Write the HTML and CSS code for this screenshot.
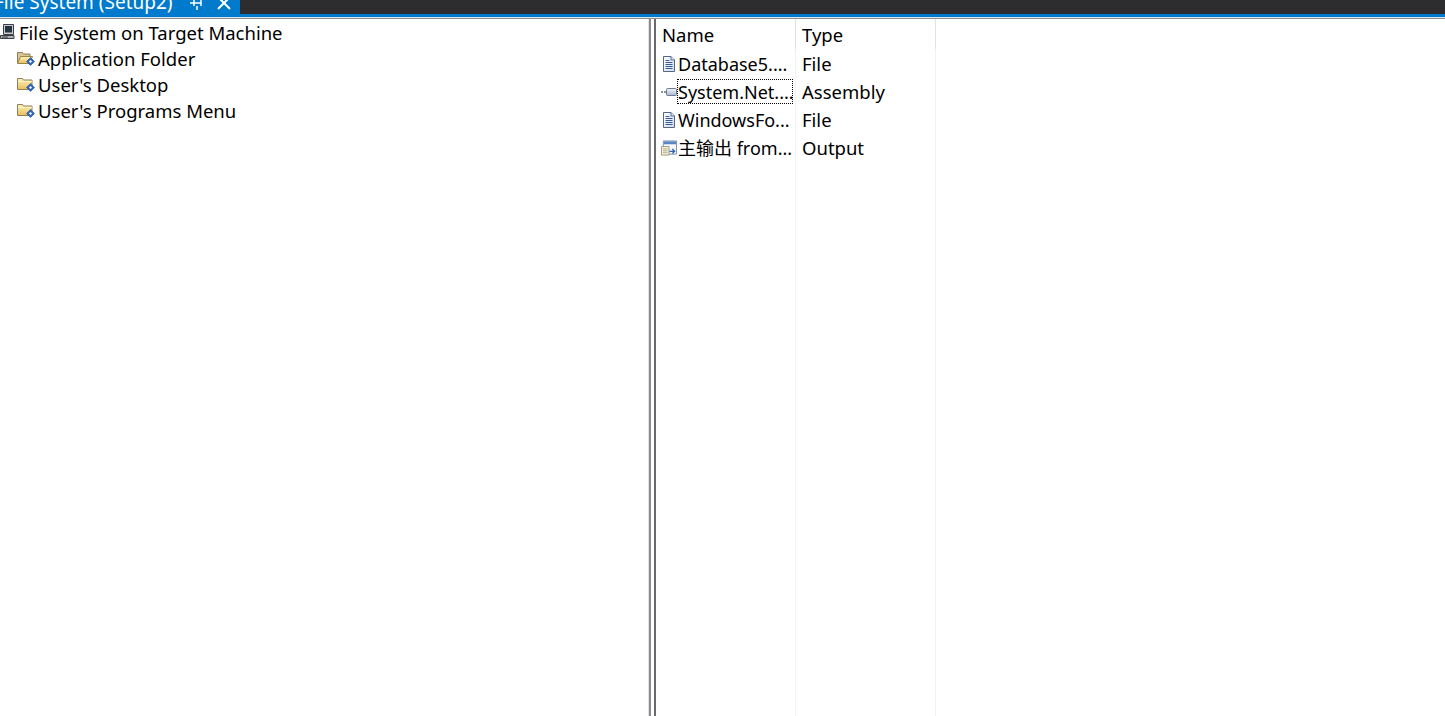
FILE: index.html
```html
<!DOCTYPE html>
<html lang="en">
<head>
<meta charset="utf-8">
<title>File System (Setup2)</title>
<link rel="stylesheet" href="styles.css">
</head>
<body>
<svg class="defs" width="0" height="0" aria-hidden="true">
  <defs>
    <linearGradient id="fold" x1="0" y1="0" x2="0" y2="1"><stop offset="0" stop-color="#fff3b8"/><stop offset="1" stop-color="#e8bd5c"/></linearGradient>
    <linearGradient id="page" x1="0" y1="0" x2="1" y2="1"><stop offset="0" stop-color="#fff"/><stop offset="1" stop-color="#cfdcf0"/></linearGradient>
    <linearGradient id="dll" x1="0" y1="0" x2="0" y2="1"><stop offset="0" stop-color="#f4f6fa"/><stop offset="1" stop-color="#a9b6cc"/></linearGradient>
    <symbol id="badge" viewBox="0 0 18 16"><path d="M13.500 7.500l4 4-4 4-4-4z" fill="#2f66c4" stroke="#1f4c9c" stroke-width=".6"/><path d="M13.500 10l1.500 1.500-1.500 1.500-1.500-1.500z" fill="#fff"/></symbol>
    <symbol id="i-open" viewBox="0 0 18 16"><path d="M.5 13.500V2.500h5l1 1.500h6.500v3" fill="#d9c690" stroke="#8f7f58"/><path d="M.5 13.500l3-7h12l-3 7z" fill="url(#fold)" stroke="#9a8449"/><use href="#badge" width="18" height="16"/></symbol>
    <symbol id="i-closed" viewBox="0 0 18 16"><path d="M.5 13.500V2.500h5l1 1.500h8.500v9.500z" fill="url(#fold)" stroke="#8f7f58"/><path d="M1 5.500h14" stroke="#fff6c8"/><use href="#badge" width="18" height="16"/></symbol>
    <symbol id="i-pc" viewBox="0 0 16 16"><path d="M3.500 .5h10v10h-10z" fill="#c9ccd2" stroke="#3c3f46"/><path d="M5 2h7v6.500H5z" fill="#25323f"/><path d="M.5 11.500h13.500v3H.5z" fill="#aeb1b8" stroke="#3c3f46"/><path d="M2 13h6" stroke="#3c3f46"/></symbol>
    <symbol id="i-file" viewBox="0 0 16 16"><path d="M2.500 .5h7.500l3.500 3.500v11.500h-11z" fill="url(#page)" stroke="#54688a"/><path d="M10 .5v3.500h3.500" fill="#e6edf8" stroke="#54688a"/><path d="M4.500 4.500h4M4.500 6.500h7M4.500 8.500h7M4.500 10.500h7M4.500 12.500h7" stroke="#3d5a98"/></symbol>
    <symbol id="i-asm" viewBox="0 0 16 16"><path d="M0 8h2M3 8h2" stroke="#8a93a3" stroke-width="2"/><path d="M6.500 4.500h8q1 0 1 1v5q0 1-1 1h-8q-1 0-1-1v-5q0-1 1-1z" fill="url(#dll)" stroke="#6e7a8f"/></symbol>
    <symbol id="i-out" viewBox="0 0 17 16"><path d="M2.500 .5h14v14h-14z" fill="#f3f6fb" stroke="#7d8ea8"/><path d="M3 1h13v3H3z" fill="#5a86c4"/><path d="M.5 6.500h8v9h-8z" fill="#fbf6dc" stroke="#9a9678"/><path d="M2 9h5M2 11h5M2 13h5" stroke="#a9a68c"/><path d="M9 11.500h5M12 9l2.500 2.500-2.500 2.500" fill="none" stroke="#2c67b5" stroke-width="1.400"/></symbol>
  </defs>
</svg>
<div class="app">
  <header class="topbar">
    <div class="tab">
      <span class="tab-title">File System (Setup2)</span>
      <svg class="tab-icon pin" viewBox="0 0 14 14"><path d="M4 -2v8M4 3h7M11 -2v8M0 3h4M7 6v4" fill="none" stroke="#fff" stroke-width="1.500"/></svg>
      <svg class="tab-icon close" viewBox="0 0 14 14"><path d="M1 -3L13 9M13 -3L1 9" fill="none" stroke="#fff" stroke-width="2"/></svg>
    </div>
  </header>
  <div class="accent"></div>
  <main class="panes">
    <section class="tree">
      <div class="node root"><svg class="icon"><use href="#i-pc"/></svg><span>File System on Target Machine</span></div>
      <div class="node child"><svg class="icon-folder"><use href="#i-open"/></svg><span>Application Folder</span></div>
      <div class="node child"><svg class="icon-folder"><use href="#i-closed"/></svg><span>User's Desktop</span></div>
      <div class="node child"><svg class="icon-folder"><use href="#i-closed"/></svg><span>User's Programs Menu</span></div>
    </section>
    <div class="splitter"></div>
    <section class="list">
      <div class="cols">
        <div class="col col-name">
          <div class="head">Name</div>
          <div class="cell"><svg class="icon"><use href="#i-file"/></svg><span class="label">Database5....</span></div>
          <div class="cell"><svg class="icon"><use href="#i-asm"/></svg><span class="label focus">System.Net....</span></div>
          <div class="cell"><svg class="icon"><use href="#i-file"/></svg><span class="label">WindowsFo...</span></div>
          <div class="cell"><svg class="icon"><use href="#i-out"/></svg><span class="label">主输出 from...</span></div>
        </div>
        <div class="col col-type">
          <div class="head">Type</div>
          <div class="cell">File</div>
          <div class="cell">Assembly</div>
          <div class="cell">File</div>
          <div class="cell">Output</div>
        </div>
      </div>
    </section>
  </main>
</div>
</body>
</html>
```
FILE: styles.css
```css
* { box-sizing: border-box; }
html, body { margin: 0; height: 100%; overflow: hidden; background: #fff; }
body { font-family: "Noto Sans", "Noto Sans CJK SC", sans-serif; font-size: 18.5px; color: #000; }
.defs { display: block; height: 0; }
.app { display: flex; flex-direction: column; height: 716px; }
.topbar { flex: none; height: 14px; background: #2d2d30; overflow: hidden; }
.tab { display: flex; align-items: flex-end; width: 240px; height: 14px; background: #007acc; color: #fff; overflow: hidden; }
.tab-title { flex: none; margin-left: -6px; margin-bottom: 2px; line-height: 20px; font-size: 19px; width: 194px; white-space: nowrap; }
.tab-icon { flex: none; width: 14px; height: 14px; }
.pin { margin-left: 2px; }
.close { margin-left: 13px; }
.accent { flex: none; height: 4px; background: #007acc; border-bottom: 1px solid #dce6ee; }
.panes { flex: 1; display: flex; min-height: 0; border-top: 1px solid #8c8c8c; }
.tree { flex: none; width: 649px; border-right: 1px solid #e3e3e3; }
.node { display: flex; align-items: center; height: 26px; white-space: nowrap; }
.child { padding-left: 17px; }
.icon { flex: none; width: 16px; height: 16px; margin-right: 3px; }
.icon-folder { flex: none; width: 18px; height: 16px; margin-right: 3px; }
.splitter { flex: none; width: 7px; border-left: 2px solid #8a8a92; border-right: 2px solid #6a6a6a; background: #fff; }
.list { flex: 1; min-width: 0; }
.cols { display: flex; height: 100%; }
.col { flex: none; width: 140px; border-right: 1px solid #eef3f8; }
.col-name { padding-left: 4px; }
.head { height: 30px; display: flex; align-items: center; margin-right: -1px; padding-left: 6px; border-right: 1px solid #e2e2e2; white-space: nowrap; }
.col-name .head { margin-left: -4px; padding-left: 6px; }
.cell { display: flex; align-items: center; height: 28px; white-space: nowrap; }
.col-name .cell .icon { margin: 2px 1px 0; }
.col-type .cell { padding-left: 6px; }
.label { display: block; align-self: flex-start; width: 116px; height: 25px; margin-top: 2px; font-size: 18px; line-height: 27px; }
.focus { margin-left: -1px; padding-left: 1px; outline: 1px dotted #000; outline-offset: -1px; }
```
